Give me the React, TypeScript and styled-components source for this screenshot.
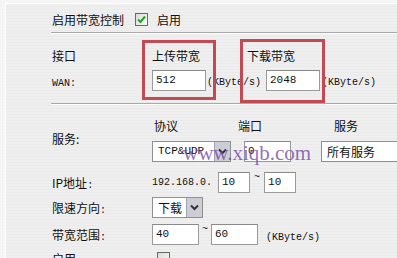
import styled, { createGlobalStyle } from "styled-components";

const GlobalStyle = createGlobalStyle`
  html, body {
    margin: 0;
    padding: 0;
    overflow: hidden;
    background: #f5f5f5;
  }
  body {
    font-family: "Noto Sans CJK SC", "DejaVu Sans", sans-serif;
    font-size: 12px;
    color: #111;
  }
`;

const Page = styled.div`
  position: relative;
  width: 397px;
  height: 258px;
  overflow: hidden;
  padding: 3px 0 0 5px;
  box-sizing: border-box;
`;

const Panel = styled.div`
  height: 100%;
  box-sizing: border-box;
  border-top: 1px solid #fff;
  border-left: 1px solid #fff;
  background: repeating-linear-gradient(#efefef 0 2px, #eaeaea 2px 3px);
  padding: 4px 0 0 46px;
`;

const Row = styled.div<{ $h?: number; $mt?: number }>`
  display: flex;
  align-items: center;
  height: ${(p) => p.$h ?? 22}px;
  margin-top: ${(p) => p.$mt ?? 0}px;
  white-space: nowrap;
`;

const Separator = styled.div<{ $mt: number }>`
  margin-top: ${(p) => p.$mt}px;
  margin-left: -1px;
  border-top: 1px solid #a9a9a9;
  border-bottom: 1px solid #fff;
`;

const Label = styled.span<{ $w?: number }>`
  display: inline-block;
  width: ${(p) => (p.$w ? `${p.$w}px` : "auto")};
  flex-shrink: 0;
`;

const Latin = styled.span`
  font-family: "Liberation Mono", "DejaVu Sans Mono", monospace;
  font-size: 10px;
`;

const Unit = styled(Latin)<{ $ml: number }>`
  margin-left: ${(p) => p.$ml}px;
  padding-top: 5px;
`;

const CheckBox = styled.span<{ $ml: number }>`
  display: inline-flex;
  align-items: center;
  justify-content: center;
  width: 13px;
  height: 13px;
  box-sizing: border-box;
  margin-left: ${(p) => p.$ml}px;
  margin-right: 9px;
  border: 1px solid #5f6f66;
  background: linear-gradient(135deg, #dcdcd6, #fafaf8);
`;

const TextBox = styled.div<{ $w: number; $ml?: number }>`
  width: ${(p) => p.$w}px;
  height: 21px;
  margin-left: ${(p) => p.$ml ?? 0}px;
  box-sizing: border-box;
  flex-shrink: 0;
  border: 1px solid #9a9a9a;
  border-top-color: #8a8a8a;
  background: #fff;
  padding-left: 3px;
  line-height: 19px;
  font-family: "Liberation Mono", "DejaVu Sans Mono", monospace;
  font-size: 11px;
`;

const SelectBox = styled.div<{ $w: number; $ml?: number }>`
  display: flex;
  width: ${(p) => p.$w}px;
  height: 21px;
  margin-left: ${(p) => p.$ml ?? 0}px;
  box-sizing: border-box;
  flex-shrink: 0;
  border: 1px solid #8f8f8f;
  background: #fff;
`;

const SelectText = styled.span<{ $mono?: boolean }>`
  flex: 1;
  padding-left: ${(p) => (p.$mono ? 5 : 5)}px;
  line-height: 19px;
  overflow: hidden;
  white-space: nowrap;
  font-family: ${(p) =>
    p.$mono
      ? `"Liberation Mono", "DejaVu Sans Mono", monospace`
      : `"Noto Sans CJK SC", sans-serif`};
  font-size: ${(p) => (p.$mono ? 11 : 12)}px;
`;

const ArrowButton = styled.span`
  width: 15px;
  display: flex;
  align-items: center;
  justify-content: center;
  background: #cdcdd6;
  border-left: 1px solid #a3a3b3;
`;

const Tilde = styled(Latin)<{ $mx: number }>`
  align-self: flex-start;
  margin: 0 ${(p) => p.$mx}px;
  line-height: 12px;
`;

const Grid = styled.div`
  display: grid;
  grid-template-columns: 100px 1fr;
  grid-template-rows: 20px 33px 28px 22px 33px 14px;
  margin-top: 10px;
  align-items: center;
  white-space: nowrap;
`;

const SpanLabel = styled.span`
  grid-row: span 2;
  padding-bottom: 6px;
`;

const Cells = styled.div`
  display: flex;
  align-items: center;
`;

const Head = styled.span<{ $w?: number; $pl?: number }>`
  display: inline-block;
  width: ${(p) => (p.$w ? `${p.$w}px` : "auto")};
  padding-left: ${(p) => p.$pl ?? 0}px;
`;

const RedFrame = styled.div<{ $x: number; $y: number; $w: number; $h: number }>`
  position: absolute;
  left: ${(p) => p.$x}px;
  top: ${(p) => p.$y}px;
  width: ${(p) => p.$w}px;
  height: ${(p) => p.$h}px;
  box-sizing: border-box;
  border: 3px solid #c24a52;
`;

const Watermark = styled.div`
  position: absolute;
  left: 183px;
  top: 142px;
  font-family: "Liberation Serif", serif;
  font-size: 21px;
  line-height: 22px;
  color: rgba(112, 72, 168, 0.78);
  pointer-events: none;
`;

function Chevron() {
  return (
    <svg width="9" height="7" viewBox="0 0 9 7">
      <polyline points="1,1.5 4.5,5 8,1.5" fill="none" stroke="#333" strokeWidth="2" />
    </svg>
  );
}

function Check() {
  return (
    <svg width="9" height="9" viewBox="0 0 9 9">
      <polyline points="1,4.5 3.5,7 8,1.5" fill="none" stroke="#27a02a" strokeWidth="2" />
    </svg>
  );
}

function Select({ w, ml, text, mono, arrow = true }: { w: number; ml?: number; text: string; mono?: boolean; arrow?: boolean }) {
  return (
    <SelectBox $w={w} $ml={ml}>
      <SelectText $mono={mono}>{text}</SelectText>
      {arrow && (
        <ArrowButton>
          <Chevron />
        </ArrowButton>
      )}
    </SelectBox>
  );
}

function App() {
  return (
    <Page>
      <GlobalStyle />
      <Panel>
        <Row>
          <Label>启用带宽控制</Label>
          <CheckBox $ml={11}>
            <Check />
          </CheckBox>
          <Label>启用</Label>
        </Row>
        <Separator $mt={2} />

        <Row $mt={10}>
          <Label $w={100}>接口</Label>
          <Label $w={95}>上传带宽</Label>
          <Label>下载带宽</Label>
        </Row>
        <Row $mt={3}>
          <Label $w={100}>
            <Latin>WAN:</Latin>
          </Label>
          <TextBox $w={54}>512</TextBox>
          <Unit $ml={1}>(KByte/s)</Unit>
          <TextBox $w={54} $ml={5}>2048</TextBox>
          <Unit $ml={2}>(KByte/s)</Unit>
        </Row>
        <Separator $mt={12} />

        <Grid>
          <SpanLabel>服务:</SpanLabel>
          <Cells>
            <Head $w={84} $pl={2}>协议</Head>
            <Head $w={96}>端口</Head>
            <Head>服务</Head>
          </Cells>
          <Cells>
            <Select w={79} text="TCP&UDP" mono />
            <TextBox $w={47} $ml={13}>0</TextBox>
            <Select w={100} ml={30} text="所有服务" arrow={false} />
          </Cells>

          <Label>
            IP地址<Latin>:</Latin>
          </Label>
          <Cells>
            <Latin>192.168.0.</Latin>
            <TextBox $w={32} $ml={6}>10</TextBox>
            <Tilde $mx={4}>~</Tilde>
            <TextBox $w={32}>10</TextBox>
          </Cells>

          <Label>
            限速方向<Latin>:</Latin>
          </Label>
          <Cells>
            <Select w={51} text="下载" />
          </Cells>

          <Label>
            带宽范围<Latin>:</Latin>
          </Label>
          <Cells>
            <TextBox $w={47}>40</TextBox>
            <Tilde $mx={3}>~</Tilde>
            <TextBox $w={47}>60</TextBox>
            <Unit $ml={8}>(KByte/s)</Unit>
          </Cells>

          <Label>
            启用<Latin>:</Latin>
          </Label>
          <Cells>
            <CheckBox $ml={5} />
          </Cells>
        </Grid>
      </Panel>

      <RedFrame $x={142} $y={40} $w={74} $h={60} />
      <RedFrame $x={240} $y={39} $w={85} $h={64} />
      <Watermark>www.xiqb.com</Watermark>
    </Page>
  );
}

export default App;
